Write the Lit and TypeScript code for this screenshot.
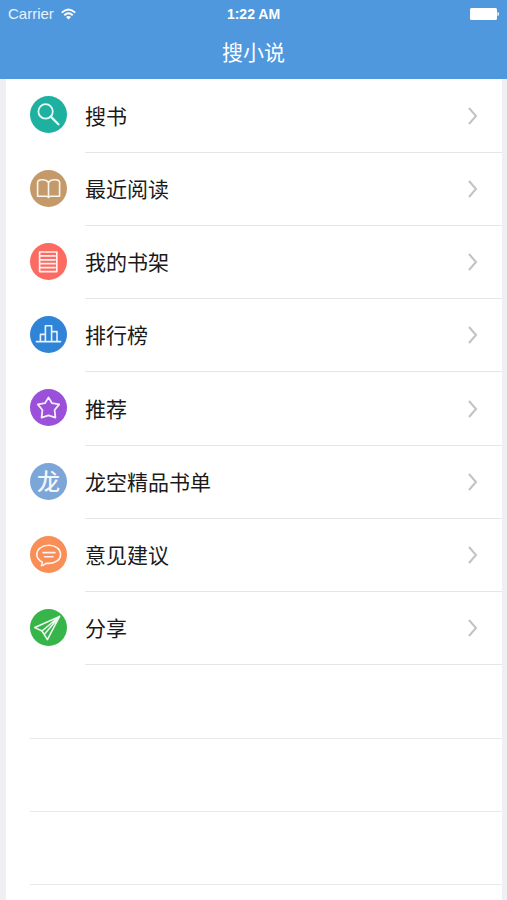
import { LitElement, html, css, svg } from "lit";
import { customElement, property } from "lit/decorators.js";

const icons: Record<string, unknown> = {
  search: svg`<circle cx="15.6" cy="15.4" r="7.2" stroke-width="1.8"/><path d="M20.8 20.6 28.4 28.2" stroke-width="2.3"/>`,
  book: svg`<path d="M18.5 12.5C17 10.2 14.5 9.6 11.5 9.8C9 10 7.6 10.8 7.6 12.6V26.2H16.2Q18 26.2 18.5 27.4Q19 26.2 20.8 26.2H29.6V12.6C29.6 10.8 28 10 25.6 9.8C22.5 9.6 20 10.2 18.5 12.5ZM18.5 12.5V27"/>`,
  shelf: svg`<path d="M9.6 9H26.8V28.6H9.6ZM11 12.9H25M11 16.8H25M11 20.7H25M11 24.6H25" stroke-width="1.7"/>`,
  rank: svg`<path d="M6.4 25.6H30.6M10.4 25.4V18.4H15.4M15.4 25.4V9.8H21.6V25.4M21.6 15.6H27V25.4"/>`,
  star: svg`<path d="M18.5 8.4 22 14.2 29.2 15.4 24.6 21 25.4 28.6 18.5 26.4 11.6 28.6 12.4 21 7.8 15.4 15 14.2Z" stroke-width="1.8"/>`,
  dragon: svg`<text class="glyph" x="18.5" y="27" text-anchor="middle">龙</text>`,
  chat: svg`<path d="M12.4 26.2C8.8 24.4 6.8 21.6 6.8 18.6C6.8 13 12 9.2 18.8 9.2S30.6 13 30.6 18.4S25.4 27.4 18.8 27.4Q17.4 27.4 16.2 27.2Q14.2 29.2 11.4 29.6Q12.6 28 12.4 26.2ZM13 16.6H25M14.6 20.8H23"/>`,
  share: svg`<path d="M29.6 7.4 4.8 18.6 12 22 17.4 30.6ZM29.6 7.4 12 22M29.6 7.4 14.2 25.4"/>`,
};

@customElement("menu-row")
class MenuRow extends LitElement {
  @property() label = "";
  @property() icon = "";
  static styles = css`
    :host { display: block; height: 100%; }
    .row {
      box-sizing: border-box; height: 100%; display: flex; align-items: center;
      padding-left: 24px; color: #1a1a1a; text-decoration: none;
    }
    .icon { flex: none; width: 37px; height: 37px; margin-right: 18px; margin-bottom: 3px; border-radius: 50%; }
    .icon svg { display: block; width: 37px; height: 37px; fill: none; stroke: #fff; stroke-width: 1.6; stroke-linejoin: round; stroke-linecap: round; opacity: .9; }
    .glyph { fill: #fff; stroke: none; font: 500 23px "Noto Sans CJK SC", sans-serif; }
    .search { background: #1fb1a0; }
    .book { background: #c59a6a; }
    .shelf { background: #fc6a62; }
    .rank { background: #2f84d8; }
    .star { background: #9a50d8; }
    .dragon { background: #7da6d8; }
    .chat { background: #f98e57; }
    .share { background: #37b44a; }
    .body {
      box-sizing: border-box; height: 100%; flex: 1; min-width: 0; display: flex;
      align-items: center; justify-content: space-between;
      padding-right: 24px; border-bottom: 1px solid #e6e6e8;
    }
    .label { padding-top: 2px; font-size: 21px; line-height: 32px; }
    .chevron { flex: none; width: 11px; height: 18px; fill: none; stroke: #c2c2c6; stroke-width: 2; }
  `;
  render() {
    return html`<a class="row" href="#${this.icon}">
      <span class="icon ${this.icon}"><svg viewBox="0 0 37 37" aria-hidden="true">${icons[this.icon]}</svg></span>
      <span class="body">
        <span class="label">${this.label}</span>
        <svg class="chevron" viewBox="0 0 11 18" aria-hidden="true"><path d="M2 1 9 9 2 17"/></svg>
      </span>
    </a>`;
  }
}

@customElement("app-root")
class AppRoot extends LitElement {
  static styles = css`
    :host {
      display: flex; flex-direction: column; min-height: 100vh; background: #efeff4;
      font-family: "Liberation Sans", "Noto Sans CJK SC", sans-serif;
    }
    .header { background: #5098de; color: #fff; padding-bottom: 10px; }
    .status {
      display: grid; grid-template-columns: 1fr auto 1fr; align-items: center;
      height: 28px; padding: 0 8px;
    }
    .carrier { display: flex; align-items: center; gap: 7px; font-size: 15px; line-height: 20px; color: #e8f2fc; }
    .wifi { width: 15px; height: 12px; }
    .time { font-size: 14px; line-height: 20px; font-weight: 700; }
    .battery { justify-self: end; width: 30px; height: 12px; }
    .title { margin: 0; padding-top: 9px; text-align: center; font-size: 21px; line-height: 32px; font-weight: 400; }
    .panel { flex: 1; margin: 0 5px 0 6px; background: #fff; }
    .list {
      list-style: none; margin: 0; padding: 0;
      display: grid; grid-auto-rows: 74px 73px 73px 73px;
    }
    .empty { margin-left: 24px; border-bottom: 1px solid #e9e9eb; }
  `;
  private items = [
    ["search", "搜书"], ["book", "最近阅读"], ["shelf", "我的书架"], ["rank", "排行榜"],
    ["star", "推荐"], ["dragon", "龙空精品书单"], ["chat", "意见建议"], ["share", "分享"],
  ];
  render() {
    return html`
      <header class="header">
        <div class="status">
          <span class="carrier">Carrier
            <svg class="wifi" viewBox="0 0 15 12" fill="none" stroke="#fff" stroke-width="1.9" aria-hidden="true">
              <path d="M.8 4.6Q7.5-1.8 14.2 4.6M3.3 7.3Q7.5 3.4 11.7 7.3"/>
              <path d="M5 9 7.5 11.6 10 9Q7.5 7 5 9Z" fill="#fff" stroke="none"/>
            </svg>
          </span>
          <span class="time">1:22 AM</span>
          <svg class="battery" viewBox="0 0 30 12" fill="#fff" aria-hidden="true">
            <rect x="1" width="27" height="12" rx="1.5"/><path d="M28.5 4Q30 4 30 6T28.5 8Z"/>
          </svg>
        </div>
        <h1 class="title">搜小说</h1>
      </header>
      <main class="panel">
        <ul class="list">
          ${this.items.map(([icon, label]) => html`<li><menu-row .icon=${icon} .label=${label}></menu-row></li>`)}
          ${[0, 1, 2].map(() => html`<li class="empty" aria-hidden="true"></li>`)}
        </ul>
      </main>`;
  }
}
